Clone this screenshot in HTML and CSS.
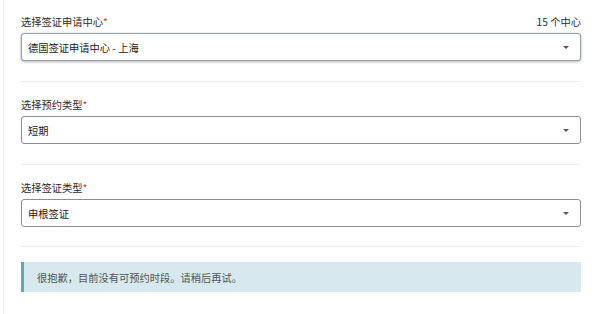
FILE: index.html
```html
<!DOCTYPE html>
<html lang="zh-CN">
<head>
<meta charset="utf-8">
<title>预约</title>
<link rel="stylesheet" href="styles.css">
</head>
<body>
<div class="card">
  <div class="field">
    <div class="label-row">
      <span class="label">选择签证申请中心<span class="req">*</span></span>
      <span class="count">15 个中心</span>
    </div>
    <div class="select focused"><span>德国签证申请中心 - 上海</span><span class="caret"></span></div>
  </div>
  <div class="divider"></div>
  <div class="field">
    <div class="label-row">
      <span class="label">选择预约类型<span class="req">*</span></span>
    </div>
    <div class="select"><span>短期</span><span class="caret"></span></div>
  </div>
  <div class="divider"></div>
  <div class="field">
    <div class="label-row">
      <span class="label">选择签证类型<span class="req">*</span></span>
    </div>
    <div class="select"><span>申根签证</span><span class="caret"></span></div>
  </div>
  <div class="divider last"></div>
  <div class="alert">很抱歉，目前没有可预约时段。请稍后再试。</div>
</div>
</body>
</html>
```

FILE: styles.css
```css
html, body {
  margin: 0;
  padding: 0;
  background: #fff;
}
body {
  font-family: "Noto Sans CJK SC", "Noto Sans", sans-serif;
  font-size: 10.25px;
  color: #333;
  padding-left: 3px;
}
.card {
  border-left: 1px solid #eee;
  padding: 15px 19px 0 17px;
  height: 314px;
  box-sizing: border-box;
}
.field {
  display: flex;
  flex-direction: column;
  gap: 4px;
}
.label-row {
  display: flex;
  justify-content: space-between;
  align-items: center;
  height: 14px;
  line-height: 14px;
}
.label {
  color: #2b2b2b;
}
.req {
  color: #c0392b;
}
.count {
  color: #2b2b2b;
}
.select {
  height: 28px;
  box-sizing: border-box;
  border: 1px solid #8a8f96;
  border-radius: 3px;
  display: flex;
  align-items: center;
  justify-content: space-between;
  padding: 0 11px 0 6px;
  color: #222;
  background: #fff;
}
.select.focused {
  border-color: #9aa3ad;
  box-shadow: 0 1px 3px rgba(0, 0, 0, 0.28), 0 0 1px rgba(0, 0, 0, 0.2);
}
.caret {
  width: 0;
  height: 0;
  border-left: 3px solid transparent;
  border-right: 3px solid transparent;
  border-top: 3px solid #555;
}
.divider {
  height: 1px;
  background: #eeeeee;
  margin: 20px 0 16px;
}
.divider.last {
  margin: 19px 0 15px;
}
.alert {
  height: 30px;
  box-sizing: border-box;
  background: #d7e9ee;
  border-left: 3px solid #5fa9b2;
  display: flex;
  align-items: center;
  padding-left: 13px;
  color: #555;
}
```
